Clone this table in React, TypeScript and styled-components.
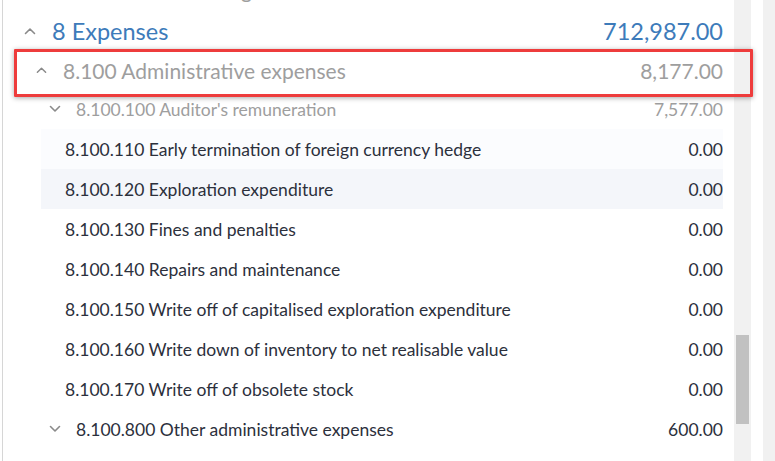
import React from "react";
import styled, { createGlobalStyle } from "styled-components";

const GlobalStyle = createGlobalStyle`
  html, body {
    margin: 0;
    padding: 0;
    background: #ffffff;
  }
  body {
    font-family: Lato, "Open Sans", "Liberation Sans", sans-serif;
    overflow: hidden;
  }
`;

type Level = 0 | 1 | 2 | 3;

interface Account {
  id: string;
  label: string;
  amount?: string;
  level: Level;
  open?: boolean;
  muted?: boolean;
  tint?: "soft" | "hover";
}

const accounts: Account[] = [
  { id: "7.900", label: "7.900 Other funding", level: 1, open: false, muted: true },
  { id: "8", label: "8 Expenses", amount: "712,987.00", level: 0, open: true },
  { id: "8.100", label: "8.100 Administrative expenses", amount: "8,177.00", level: 1, open: true, muted: true },
  { id: "8.100.100", label: "8.100.100 Auditor's remuneration", amount: "7,577.00", level: 2, open: false, muted: true },
  { id: "8.100.110", label: "8.100.110 Early termination of foreign currency hedge", amount: "0.00", level: 3, tint: "soft" },
  { id: "8.100.120", label: "8.100.120 Exploration expenditure", amount: "0.00", level: 3, tint: "hover" },
  { id: "8.100.130", label: "8.100.130 Fines and penalties", amount: "0.00", level: 3 },
  { id: "8.100.140", label: "8.100.140 Repairs and maintenance", amount: "0.00", level: 3 },
  { id: "8.100.150", label: "8.100.150 Write off of capitalised exploration expenditure", amount: "0.00", level: 3 },
  { id: "8.100.160", label: "8.100.160 Write down of inventory to net realisable value", amount: "0.00", level: 3 },
  { id: "8.100.170", label: "8.100.170 Write off of obsolete stock", amount: "0.00", level: 3 },
  { id: "8.100.800", label: "8.100.800 Other administrative expenses", amount: "600.00", level: 2, open: false },
];

const fontSizes = [23.5, 21, 17.5, 17.5];
const rowHeights = [40, 38, 40, 40];
const indents = [21, 33, 46, 24];

const Page = styled.div`
  position: relative;
  display: flex;
  width: 775px;
  height: 461px;
  overflow: hidden;
`;

const Tree = styled.div`
  flex: 1;
  margin-left: 2px;
  border-left: 1px solid #d6d6d6;
  padding-right: 11px;
  overflow: hidden;
`;

const Row = styled.div<{ $level: Level; $muted?: boolean; $tint?: "soft" | "hover"; $clipped?: boolean }>`
  display: flex;
  align-items: center;
  height: ${(p) => rowHeights[p.$level]}px;
  margin-top: ${(p) => (p.$clipped ? "-30px" : "0")};
  margin-bottom: ${(p) => (p.$clipped ? "3px" : "0")};
  margin-left: ${(p) => (p.$level === 3 ? "38px" : "0")};
  padding-left: ${(p) => indents[p.$level]}px;
  font-size: ${(p) => fontSizes[p.$level]}px;
  color: ${(p) => (p.$level === 0 ? "#3d7bba" : p.$muted ? "#9e9e9e" : "#2c303c")};
  background: ${(p) => (p.$tint === "hover" ? "#f4f6fa" : p.$tint === "soft" ? "#fbfcfe" : "transparent")};
  white-space: nowrap;
`;

const Toggle = styled.span<{ $level: Level }>`
  display: inline-flex;
  align-items: center;
  width: ${(p) => (p.$level === 1 ? 11 : 12)}px;
  margin-right: ${(p) => (p.$level === 2 ? 15 : 16)}px;
  color: #8a8a8a;
`;

const Label = styled.span`
  flex: 1;
  overflow: hidden;
  text-overflow: ellipsis;
`;

const Amount = styled.span`
  margin-left: 16px;
  text-align: right;
`;

const Track = styled.div`
  width: 17px;
  height: 100%;
  background: #f1f1f1;
  display: flex;
  justify-content: center;
`;

const Thumb = styled.div`
  width: 13px;
  height: 89px;
  margin-top: 335px;
  background: #c1c1c1;
`;

const Gutter = styled.div`
  width: 12px;
`;

const OuterTrack = styled.div`
  width: 12px;
  height: 100%;
  background: #f1f1f1;
`;

const Spotlight = styled.div`
  position: absolute;
  left: 14px;
  top: 49px;
  width: 733px;
  height: 42px;
  border: 3px solid #ee3c3c;
  border-radius: 1px;
  box-shadow: 0 1px 5px rgba(0, 0, 0, 0.35);
  pointer-events: none;
`;

const Chevron = ({ open }: { open?: boolean }) => (
  <svg width="12" height="8" viewBox="0 0 12 8" fill="none">
    <polyline
      points={open ? "1.5,6.5 6,2 10.5,6.5" : "1.5,1.5 6,6 10.5,1.5"}
      stroke="currentColor"
      strokeWidth="1.6"
      strokeLinecap="round"
      strokeLinejoin="round"
    />
  </svg>
);

const App = () => {
  return (
    <>
      <GlobalStyle />
      <Page>
        <Tree>
          {accounts.map((a, i) => (
            <Row key={a.id} $level={a.level} $muted={a.muted} $tint={a.tint} $clipped={i === 0}>
              {a.level < 3 && (
                <Toggle $level={a.level}>
                  <Chevron open={a.open} />
                </Toggle>
              )}
              <Label>{a.label}</Label>
              {a.amount && <Amount>{a.amount}</Amount>}
            </Row>
          ))}
        </Tree>
        <Track>
          <Thumb />
        </Track>
        <Gutter />
        <OuterTrack />
        <Spotlight />
      </Page>
    </>
  );
};

export default App;
